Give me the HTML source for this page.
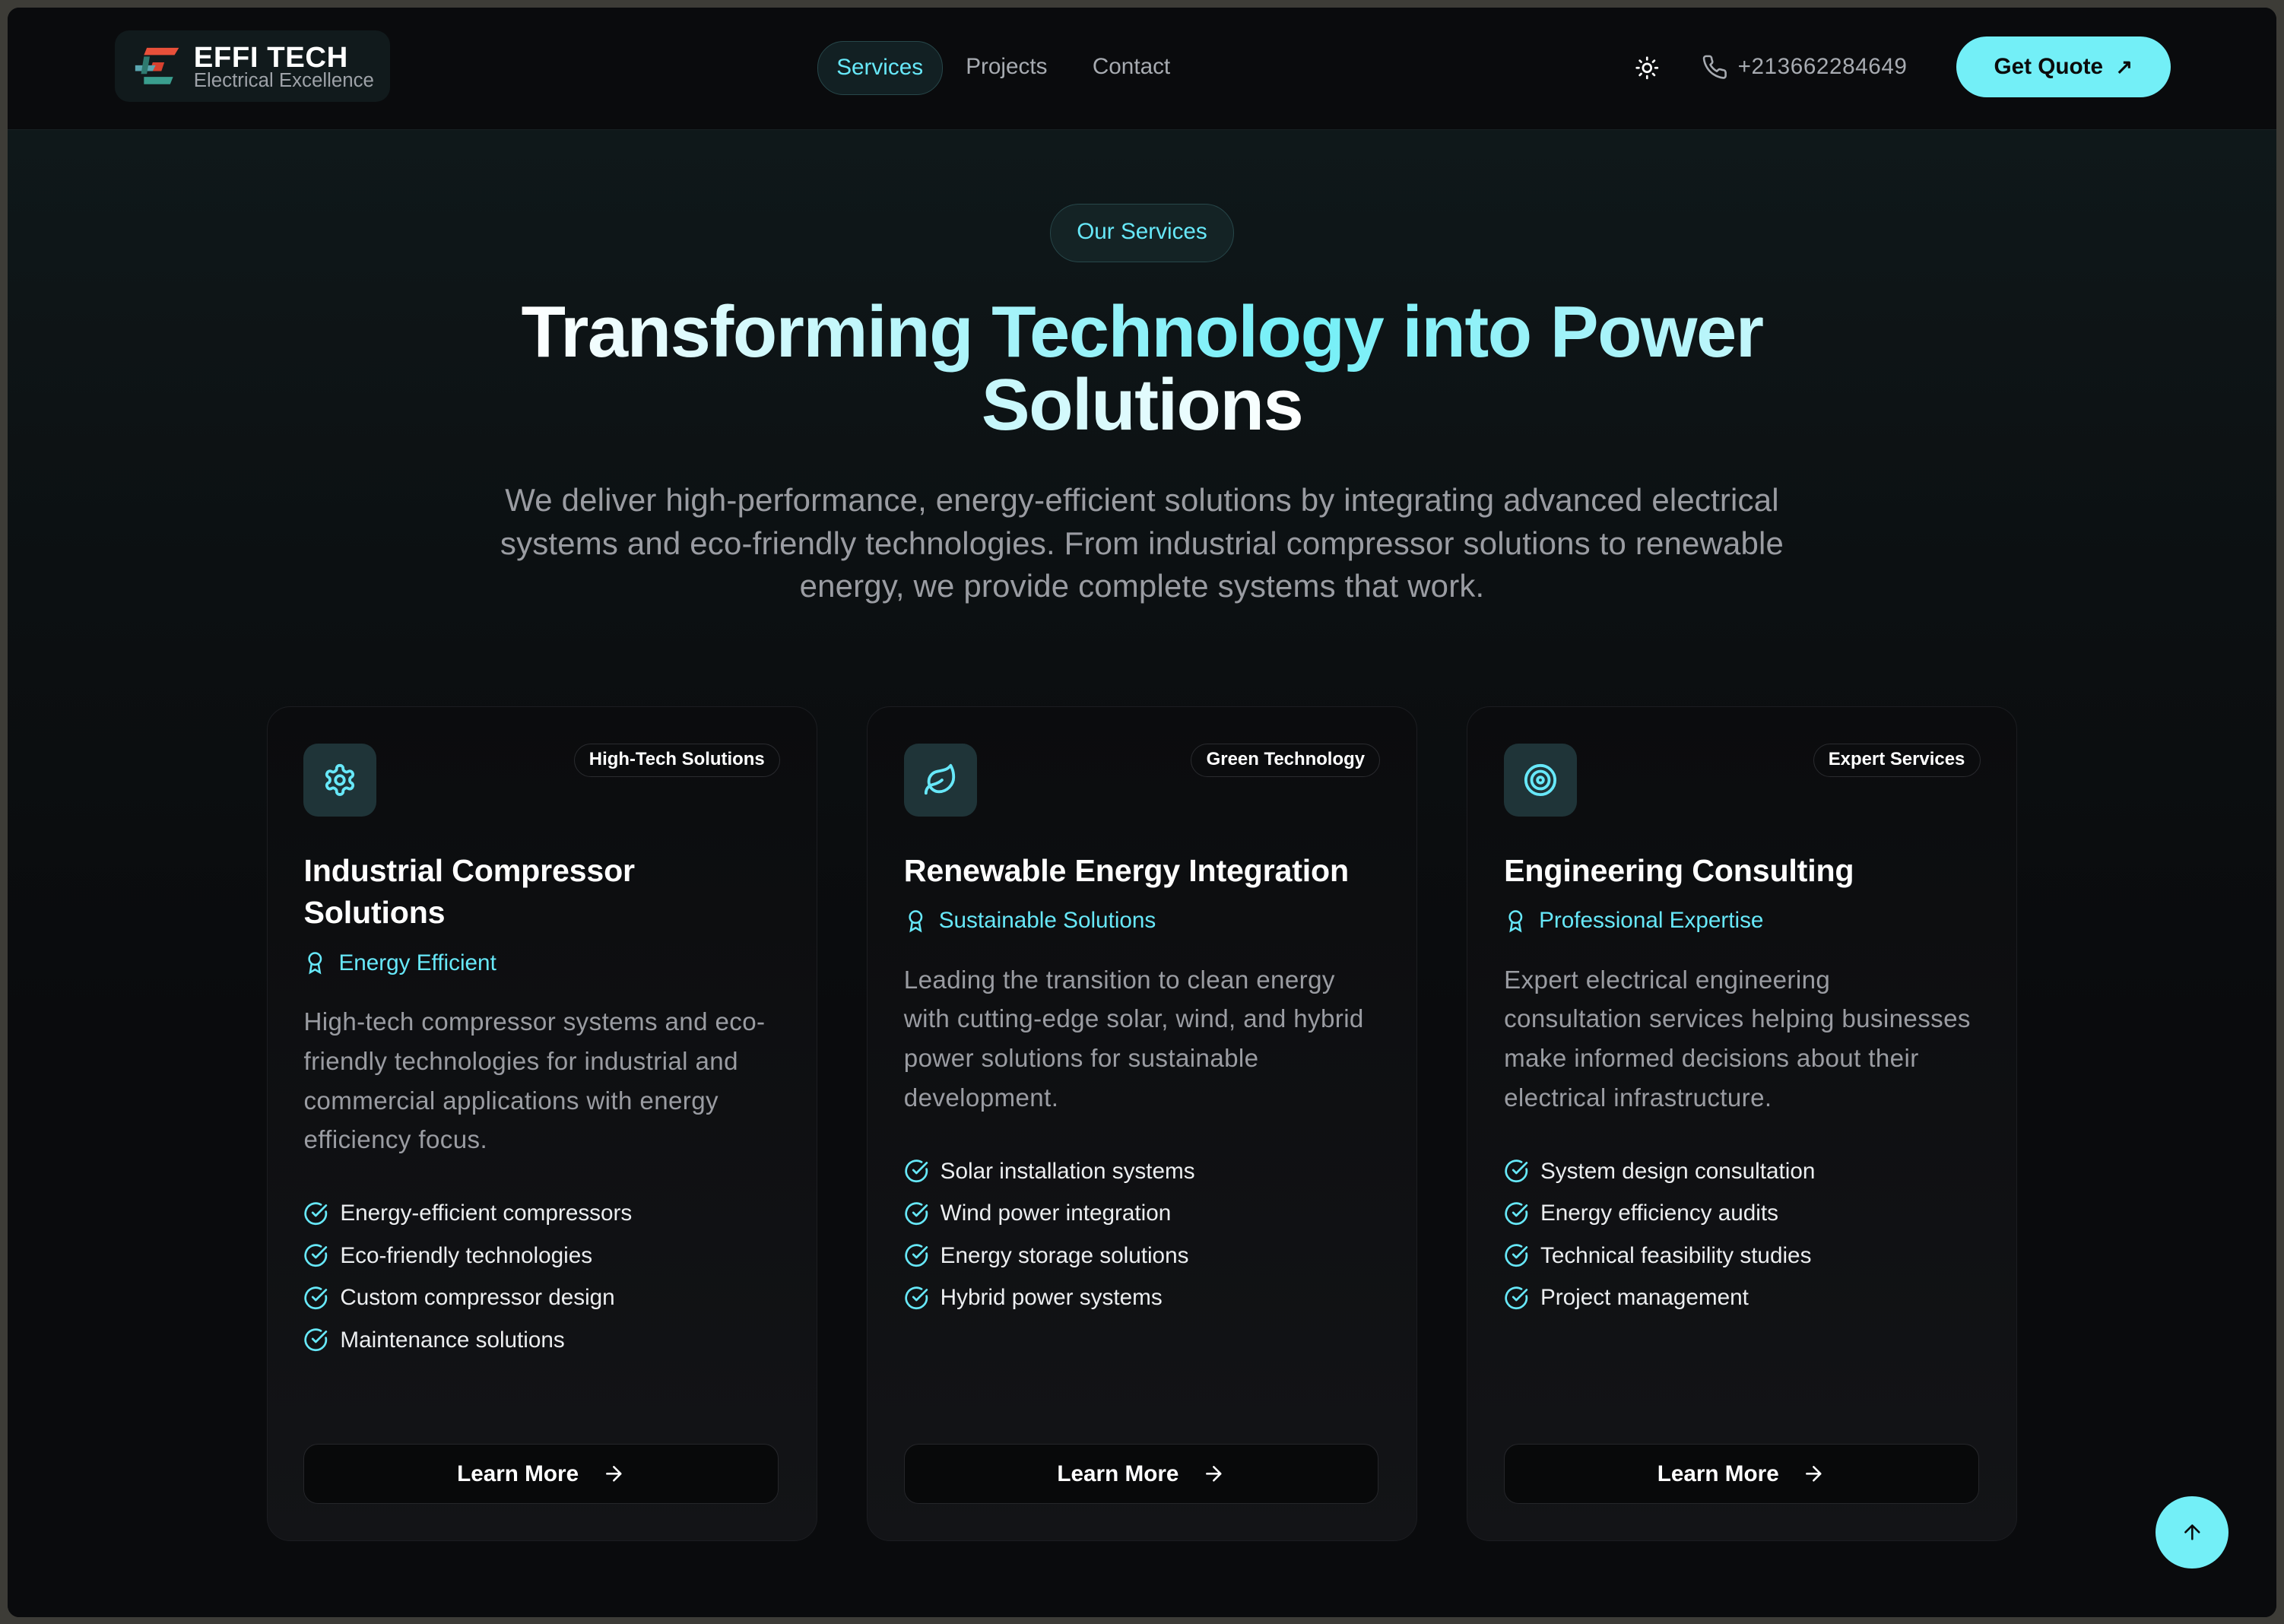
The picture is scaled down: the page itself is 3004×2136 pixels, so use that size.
<!DOCTYPE html>
<html><head><meta charset="utf-8">
<style>
*{box-sizing:border-box;margin:0;padding:0}
html,body{width:3004px;height:2136px;overflow:hidden;background:#3d3c37}
#z{zoom:1.91582;width:1568px;height:1115px;position:relative;font-family:"Liberation Sans",Arial,sans-serif}
.page{position:absolute;left:5px;top:5px;width:1558px;height:1105px;border-radius:8px;background:#0a0b0d;overflow:hidden}
.hero{position:absolute;left:0;top:84px;width:100%;height:1021px;background:linear-gradient(180deg,#0f181a 0%,#0c1012 30%,#0a0b0d 60%,#0a0b0d 100%)}
.nav{position:absolute;left:0;top:0;width:100%;height:84px;background:#0a0b0d;border-bottom:1px solid #172022}
.a{position:absolute}
.logo{left:74px;top:16px;width:189px;height:49px;border-radius:10px;background:#111a1c}
.lt1{left:128px;top:23px;color:#fff;font-weight:bold;font-size:20px;letter-spacing:.3px}
.lt2{left:128px;top:43px;color:#9ea2a8;font-size:13.5px}
.navl{font-size:15.5px;color:#a7abb1;top:32px}
.pill{left:556px;top:23px;width:86px;height:37px;border-radius:18px;border:1px solid #27474a;background:#122023;color:#67e8f9;font-size:15.5px;text-align:center;line-height:35px}
.quote{left:1338px;top:20px;width:147px;height:42px;border-radius:21px;background:#73eff7;color:#0b0b0b;font-weight:bold;font-size:15.5px;line-height:42px;text-align:center}
.badge{left:716px;top:135px;width:126px;height:40px;border-radius:20px;border:1px solid #27474a;background:#142325;color:#67e8f9;font-size:15.5px;line-height:38px;text-align:center}
h1{position:absolute;left:0;width:100%;top:198px;text-align:center;font-size:50px;line-height:50px;font-weight:bold;letter-spacing:-.8px;color:#fff}
.g{background:linear-gradient(90deg,#fff 0%,#a8f3f9 30%,#73eff7 50%,#a8f3f9 70%,#fff 100%);-webkit-background-clip:text;background-clip:text;color:transparent}
.sub{position:absolute;left:322px;width:914px;top:324px;text-align:center;color:#9a9ca2;font-size:21.9px;line-height:29.5px;letter-spacing:.1px}
.card{position:absolute;top:480px;width:378px;height:573px;border-radius:16px;border:1px solid #1c1d21;background:linear-gradient(180deg,#0b0c0e,#131417)}
.ic{position:absolute;left:25px;top:25px;width:50px;height:50px;border-radius:10px;background:#1f3438;display:flex;align-items:center;justify-content:center}
.tag{position:absolute;right:25px;top:25px;height:23px;border-radius:12px;border:1px solid #2a2b2f;color:#fff;font-size:12.5px;font-weight:bold;line-height:21px;padding:0 10px;background:#0b0c0e}
.ct{position:absolute;left:25px;top:98px;width:326px;color:#fff;font-weight:bold;font-size:21.5px;line-height:29px;letter-spacing:-.1px}
.cs{color:#67e8f9;font-size:15.5px;display:flex;align-items:center;gap:8px;margin-top:5px;font-weight:normal;letter-spacing:0}
.cd{color:#9a9ca2;font-size:17.3px;line-height:27px;margin-top:13px;font-weight:normal;letter-spacing:.2px}
.ul{list-style:none;margin-top:22px;font-weight:normal;letter-spacing:0}
.ul li{color:#eceef0;font-size:15.5px;height:29px;display:flex;align-items:center;gap:8px}
.btn{position:absolute;left:25px;bottom:25px;width:326px;height:41px;border-radius:10px;border:1px solid #25262a;background:#08090a;color:#fff;font-size:15.5px;font-weight:bold;display:flex;align-items:center;justify-content:center;gap:16px}
.top{left:1475px;top:1022px;width:50px;height:50px;border-radius:25px;background:#73eff7;display:flex;align-items:center;justify-content:center}
</style></head><body><div id="z"><div class="page">
<div class="hero"></div>
<div class="nav">
 <div class="a logo"></div>
 <svg class="a" style="left:86px;top:26px" width="34" height="30" viewBox="0 0 34 30"><path d="M10 2h22l-3 5H8z" fill="#e8503a"/><path d="M14 12h8l-2 6h-8z" fill="#d8412f"/><path d="M2 14h14l-2 4H2z" fill="#5aa6b0"/><path d="M8 8h4l-2 12H6z" fill="#2e7a70"/><path d="M8 22h20l-2 5H8z" fill="#3a9e8e"/></svg>
 <div class="a lt1">EFFI TECH</div>
 <div class="a lt2">Electrical Excellence</div>
 <div class="a pill">Services</div>
 <div class="a navl" style="left:658px">Projects</div>
 <div class="a navl" style="left:745px">Contact</div>
 <svg class="a" style="left:1117px;top:33px" width="17" height="17" viewBox="0 0 24 24" fill="none" stroke="#fff" stroke-width="2" stroke-linecap="round"><circle cx="12" cy="12" r="4"/><path d="M12 2v2M12 20v2M4.9 4.9l1.4 1.4M17.7 17.7l1.4 1.4M2 12h2M20 12h2M4.9 19.1l1.4-1.4M17.7 6.3l1.4-1.4"/></svg>
 <svg class="a" style="left:1163px;top:32px" width="18" height="18" viewBox="0 0 24 24" fill="none" stroke="#a7abb1" stroke-width="1.8" stroke-linejoin="round"><path d="M22 16.9v3a2 2 0 0 1-2.2 2 19.8 19.8 0 0 1-8.6-3.1 19.5 19.5 0 0 1-6-6A19.8 19.8 0 0 1 2.1 4.2 2 2 0 0 1 4.1 2h3a2 2 0 0 1 2 1.7c.1 1 .4 1.9.7 2.8a2 2 0 0 1-.5 2.1L8 9.8a16 16 0 0 0 6 6l1.3-1.3a2 2 0 0 1 2.1-.4c.9.3 1.800.6 2.8.7a2 2 0 0 1 1.7 2z"/></svg>
 <div class="a navl" style="left:1188px;color:#a7abb1;letter-spacing:.3px">+213662284649</div>
 <div class="a quote">Get Quote &nbsp;<span style="font-size:14px">↗</span></div>
</div>
<div class="a badge">Our Services</div>
<h1><span class="g">Transforming Technology into Power<br>Solutions</span></h1>
<div class="sub">We deliver high-performance, energy-efficient solutions by integrating advanced electrical systems and eco-friendly technologies. From industrial compressor solutions to renewable energy, we provide complete systems that work.</div>

<div class="card" style="left:178px">
 <div class="ic"><svg width="24" height="24" viewBox="0 0 24 24" fill="none" stroke="#67e8f9" stroke-width="2" stroke-linejoin="round"><path d="M12.2 2h-.4a2 2 0 0 0-2 2v.2a2 2 0 0 1-1 1.7l-.4.3a2 2 0 0 1-2 0l-.2-.1a2 2 0 0 0-2.7.7l-.2.4a2 2 0 0 0 .7 2.7l.2.1a2 2 0 0 1 1 1.7v.5a2 2 0 0 1-1 1.7l-.2.1a2 2 0 0 0-.7 2.7l.2.4a2 2 0 0 0 2.7.7l.2-.1a2 2 0 0 1 2 0l.4.3a2 2 0 0 1 1 1.7v.2a2 2 0 0 0 2 2h.4a2 2 0 0 0 2-2v-.2a2 2 0 0 1 1-1.7l.4-.3a2 2 0 0 1 2 0l.2.1a2 2 0 0 0 2.7-.7l.2-.4a2 2 0 0 0-.7-2.7l-.2-.1a2 2 0 0 1-1-1.7v-.5a2 2 0 0 1 1-1.7l.2-.1a2 2 0 0 0 .7-2.7l-.2-.4a2 2 0 0 0-2.7-.7l-.2.1a2 2 0 0 1-2 0l-.4-.3a2 2 0 0 1-1-1.7V4a2 2 0 0 0-2-2z"/><circle cx="12" cy="12" r="3"/></svg></div>
 <div class="tag">High-Tech Solutions</div>
 <div class="ct">Industrial Compressor Solutions
  <div class="cs"><svg width="16" height="17" viewBox="0 0 24 24" fill="none" stroke="#67e8f9" stroke-width="2"><circle cx="12" cy="8" r="6"/><path d="M15.5 12.9 17 22l-5-3-5 3 1.5-9.1"/></svg>Energy Efficient</div>
  <div class="cd">High-tech compressor systems and eco-friendly technologies for industrial and commercial applications with energy efficiency focus.</div>
  <ul class="ul"><li><i class="ck"></i>Energy-efficient compressors</li><li><i class="ck"></i>Eco-friendly technologies</li><li><i class="ck"></i>Custom compressor design</li><li><i class="ck"></i>Maintenance solutions</li></ul>
 </div>
 <div class="btn">Learn More <i class="ar"></i></div>
</div>

<div class="card" style="left:590px">
 <div class="ic"><svg width="24" height="24" viewBox="0 0 24 24" fill="none" stroke="#67e8f9" stroke-width="2" stroke-linecap="round" stroke-linejoin="round"><path d="M11 20A7 7 0 0 1 9.8 6.1C15.5 5 17 4.5 19 2c1 2 2 4.2 2 8 0 5.5-4.8 10-10 10z"/><path d="M2 21c0-3 1.9-5.4 5.1-6C9.5 14.5 12 13 13 12"/></svg></div>
 <div class="tag">Green Technology</div>
 <div class="ct">Renewable Energy Integration
  <div class="cs"><svg width="16" height="17" viewBox="0 0 24 24" fill="none" stroke="#67e8f9" stroke-width="2"><circle cx="12" cy="8" r="6"/><path d="M15.5 12.9 17 22l-5-3-5 3 1.5-9.1"/></svg>Sustainable Solutions</div>
  <div class="cd">Leading the transition to clean energy with cutting-edge solar, wind, and hybrid power solutions for sustainable development.</div>
  <ul class="ul"><li><i class="ck"></i>Solar installation systems</li><li><i class="ck"></i>Wind power integration</li><li><i class="ck"></i>Energy storage solutions</li><li><i class="ck"></i>Hybrid power systems</li></ul>
 </div>
 <div class="btn">Learn More <i class="ar"></i></div>
</div>

<div class="card" style="left:1002px">
 <div class="ic"><svg width="24" height="24" viewBox="0 0 24 24" fill="none" stroke="#67e8f9" stroke-width="2"><circle cx="12" cy="12" r="10"/><circle cx="12" cy="12" r="6"/><circle cx="12" cy="12" r="2"/></svg></div>
 <div class="tag">Expert Services</div>
 <div class="ct">Engineering Consulting
  <div class="cs"><svg width="16" height="17" viewBox="0 0 24 24" fill="none" stroke="#67e8f9" stroke-width="2"><circle cx="12" cy="8" r="6"/><path d="M15.5 12.9 17 22l-5-3-5 3 1.5-9.1"/></svg>Professional Expertise</div>
  <div class="cd">Expert electrical engineering<br>consultation services helping businesses<br>make informed decisions about their<br>electrical infrastructure.</div>
  <ul class="ul"><li><i class="ck"></i>System design consultation</li><li><i class="ck"></i>Energy efficiency audits</li><li><i class="ck"></i>Technical feasibility studies</li><li><i class="ck"></i>Project management</li></ul>
 </div>
 <div class="btn">Learn More <i class="ar"></i></div>
</div>

<div class="a top"><svg width="16" height="16" viewBox="0 0 24 24" fill="none" stroke="#0b0b0b" stroke-width="2" stroke-linecap="round" stroke-linejoin="round"><path d="M12 19V5M5 12l7-7 7 7"/></svg></div>
</div></div>
<script>
document.querySelectorAll('.ck').forEach(function(e){e.outerHTML='<svg width="17" height="17" viewBox="0 0 24 24" fill="none" stroke="#67e8f9" stroke-width="2" stroke-linecap="round" stroke-linejoin="round"><path d="M21.8 10A10 10 0 1 1 17 3.3"/><path d="m9 11 3 3L22 4"/></svg>';});
document.querySelectorAll('.ar').forEach(function(e){e.outerHTML='<svg width="16" height="16" viewBox="0 0 24 24" fill="none" stroke="#fff" stroke-width="2" stroke-linecap="round" stroke-linejoin="round"><path d="M5 12h14M12 5l7 7-7 7"/></svg>';});
</script>
</body></html>
